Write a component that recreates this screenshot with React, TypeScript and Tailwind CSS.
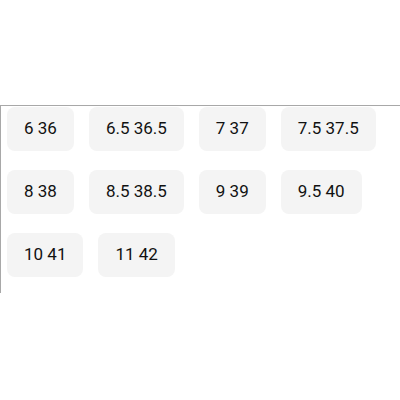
const sizes = [
  "6 36",
  "6.5 36.5",
  "7 37",
  "7.5 37.5",
  "8 38",
  "8.5 38.5",
  "9 39",
  "9.5 40",
  "10 41",
  "11 42",
];

export default function App() {
  return (
    <div className="h-[400px] w-[400px] bg-white pt-[105px] font-['Roboto',sans-serif]">
      <div className="h-[188px] border-l border-t border-[#a8a8a8] pl-[6px] pt-[1px]">
        <div className="flex flex-wrap gap-x-[15px] gap-y-[19px]">
          {sizes.map((s) => (
            <button
              key={s}
              className="flex h-[44px] items-center rounded-lg bg-[#f4f4f4] px-[17px] text-[17px] text-[#111]"
            >
              {s}
            </button>
          ))}
        </div>
      </div>
    </div>
  );
}
